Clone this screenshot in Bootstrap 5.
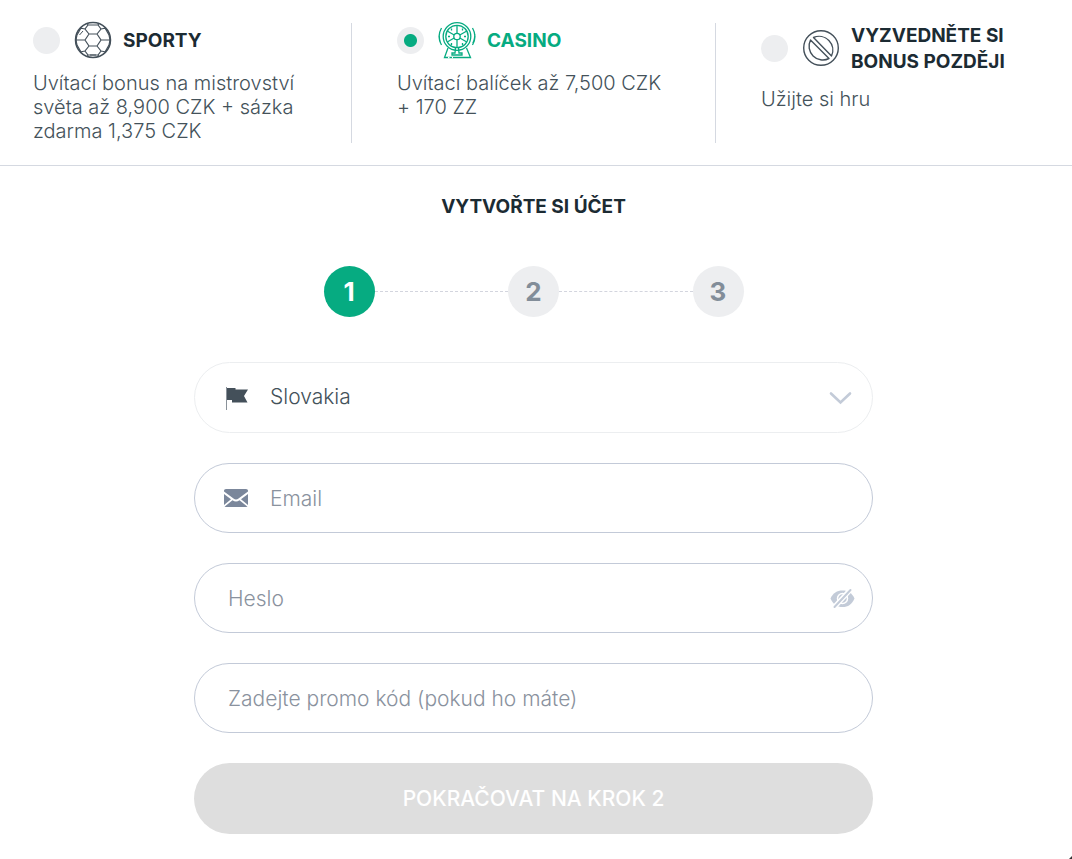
<!DOCTYPE html>
<html lang="cs">
<head>
<meta charset="utf-8">
<meta name="viewport" content="width=device-width, initial-scale=1">
<title>Vytvořte si účet</title>
<link href="https://cdn.jsdelivr.net/npm/bootstrap@5.3.0/dist/css/bootstrap.min.css" rel="stylesheet">
<style>
  body { font-family: Inter, "Liberation Sans", sans-serif; color: #44525a; background: #fff; }
  .bonuses { padding: 20px 4px 22px 0; border-bottom: 1px solid #d5d9e1; overflow: hidden; }
  .bonus { padding: 0 40px 0 45px; }
  .bonus + .bonus::before { content: ""; position: absolute; left: -1px; top: 3px; bottom: 0; border-left: 1px solid #d5d9e1; }
  .bonus-name { min-height: 39px; font-size: 19px; line-height: 26px; font-weight: 700; color: #1c2b33; cursor: pointer; }
  .bonus-name span { padding-top: 3px; }
  .bonus-name svg { width: 38px; height: 38px; margin: 0 11px 0 14px; flex: none; }
  .bonus-text { font-size: 20px; line-height: 24px; font-weight: 300; margin: 12px 0 0; }
  .bonus-radio.form-check-input { width: 27px; height: 27px; margin: 2px 0 0; border: 0; background: #edeef0; flex: none; }
  .bonus-radio.form-check-input:checked { background: radial-gradient(circle, #06ab81 6px, #edeef0 7px); }
  .bonus-name.chosen { color: #06ab81; }
  .signup { padding: 28px 5px 20px 0; }
  .signup-inner { max-width: 679px; }
  h1 { font-size: 19px; line-height: 26px; font-weight: 700; color: #1c2b33; margin: 0 0 46px; }
  .steps { max-width: 420px; margin-bottom: 45px; padding: 0; list-style: none; }
  .step { width: 51px; height: 51px; flex: none; background: #edeef0; color: #828d99; font-size: 26px; font-weight: 700; }
  .step-now { background: #06ab81; color: #fff; }
  .step-line { border-top: 1px dashed #d3d5de; }
  .fields { gap: 30px; }
  .pill.form-control, .pill.form-select { height: 70px; border: 1px solid #c3cad8; border-radius: 36px; padding: 0 60px 0 33px; font-size: 21px; font-weight: 300; color: #44525a; background: #fff; }
  .pill.form-select { height: 71px; border-color: #eceef0; padding-bottom: 2px; }
  .pill.with-icon { padding-left: 75px; }
  .pill::placeholder { color: #8a929e; opacity: 1; }
  .lead-icon { left: 29px; width: 26px; height: 26px; pointer-events: none; }
  .tail-icon { right: 18px; width: 26px; height: 26px; }
  .chevron { right: 19px; }
  .go.btn { height: 71px; border: 0; border-radius: 36px; background: #dedede; color: #fff; font-size: 21px; font-weight: 500; opacity: 1; }
  .corner { width: 3px; height: 3px; background: #333; clip-path: polygon(100% 0, 100% 100%, 0 100%); }
</style>
</head>
<body>
<header class="bonuses container-fluid">
  <div class="row">
    <div class="bonus col-4 position-relative">
      <label class="bonus-name d-flex align-items-center">
        <input class="form-check-input bonus-radio" type="radio" name="bonus">
        <svg viewBox="0 0 38 38" fill="none" stroke="#44505a" stroke-width="1.2" aria-hidden="true"><circle cx="19" cy="19" r="17.5" stroke-width="1.5"/><path d="M11 19l4-6h8l4 6-4 6h-8zM15 13l-4-5 3-4h10l3 4-4 5M15 25l-4 5 3 4h10l3-4-4-5M2 19h9M27 19h9M11 8L6 7M27 8l5-1M11 30l-5 1M27 30l5 1M2 19l1-5 4-7M36 19l-1-5-4-7M2 19l1 5 4 7M36 19l-1 5-4 7M14 4l-1-2M24 4l1-2M14 34l-1 2M24 34l1 2"/><path d="M5.500 14l3.500-4M16 34h6" stroke-width="1"/></svg>
        <span>SPORTY</span>
      </label>
      <p class="bonus-text">Uvítací bonus na mistrovství světa až 8,900 CZK + sázka zdarma 1,375 CZK</p>
    </div>
    <div class="bonus col-4 position-relative">
      <label class="bonus-name chosen d-flex align-items-center">
        <input class="form-check-input bonus-radio" type="radio" name="bonus" checked>
        <svg viewBox="0 0 38 38" fill="none" stroke="#06ab81" stroke-width="1.300" aria-hidden="true"><circle cx="19" cy="15.500" r="13.800"/><circle cx="19" cy="15.500" r="11.200"/><circle cx="19" cy="15.500" r="3.200"/><path d="M19 12.300v-8M19 18.700v8M16.200 14l-7-4M21.800 14l7-4M16.200 17l-7 4M21.800 17l7 4"/><path d="M3.500 7a17 17 0 0 0 0 17M1.200 14q0 5 1.300 8M34.500 7a17 17 0 0 1 0 17M36.800 13q0 6-2 9M10 27L6.500 36.500h26L28.500 27M17.500 27l-.5 5h-3v2h10v-2h-3l-.5-5"/><path d="M13.500 7.500v2M24.500 7.500v2M10 15.500h2M26 15.500h2M13.500 22v2M24.500 22v2"/><path d="M10 36.500h1.500M14 36.500h1" stroke="#fff"/></svg>
        <span>CASINO</span>
      </label>
      <p class="bonus-text">Uvítací balíček až 7,500 CZK + 170 ZZ</p>
    </div>
    <div class="bonus col-4 position-relative">
      <label class="bonus-name d-flex align-items-center">
        <input class="form-check-input bonus-radio" type="radio" name="bonus">
        <svg viewBox="0 0 38 38" fill="none" stroke="#44505a" stroke-width="1.400" aria-hidden="true"><circle cx="19" cy="19" r="17.300"/><path d="M11.500 8.500a13.800 13.800 0 0 1 18 18.500zM8.500 11a13.800 13.800 0 0 0 18.500 18.500z" stroke-linejoin="round"/></svg>
        <span>VYZVEDNĚTE SI BONUS POZDĚJI</span>
      </label>
      <p class="bonus-text">Užijte si hru</p>
    </div>
  </div>
</header>
<main class="signup container-fluid">
  <div class="signup-inner mx-auto">
    <h1 class="text-center">VYTVOŘTE SI ÚČET</h1>
    <ol class="steps d-flex align-items-center mx-auto">
      <li class="step step-now rounded-circle d-flex align-items-center justify-content-center" aria-current="step">1</li>
      <li class="step-line flex-fill" aria-hidden="true"></li>
      <li class="step rounded-circle d-flex align-items-center justify-content-center">2</li>
      <li class="step-line flex-fill" aria-hidden="true"></li>
      <li class="step rounded-circle d-flex align-items-center justify-content-center">3</li>
    </ol>
    <form class="fields d-grid">
      <div class="position-relative">
        <select class="form-select pill with-icon" aria-label="Země"><option>Slovakia</option></select>
        <svg class="lead-icon position-absolute top-50 translate-middle-y" viewBox="0 0 26 26" aria-hidden="true"><path d="M3.500 2v23" stroke="#8a929a" stroke-width="1"/><path d="M4 3h8.500v1.500H25L21 11l3.500 6.500H9V15H4z" fill="#44505a"/></svg>
        <svg class="tail-icon chevron position-absolute top-50 translate-middle-y pe-none" viewBox="0 0 26 26" fill="none" stroke="#c3cbd8" stroke-width="2.600" stroke-linecap="round" aria-hidden="true"><path d="M3 8.500l9.500 9L22 8.500"/></svg>
      </div>
      <div class="position-relative">
        <input class="form-control pill with-icon" type="email" placeholder="Email" aria-label="Email">
        <svg class="lead-icon position-absolute top-50 translate-middle-y" viewBox="0 0 26 26" fill="#7b879b" aria-hidden="true"><path d="M3 4h20q2 0 2 1.500v1L15.500 13.500Q13 15.500 10.500 13.500L1 6.500v-1Q1 4 3 4zM1 9l7 5.200L1 20zM25 9l-7 5.200L25 20zM1.500 21.800L9.500 15.300q3.500 2.500 7 0l8 6.500-1.500.200H3z"/></svg>
      </div>
      <div class="position-relative">
        <input class="form-control pill" type="password" placeholder="Heslo" aria-label="Heslo">
        <button type="button" class="tail-icon btn p-0 border-0 d-flex position-absolute top-50 translate-middle-y" aria-label="Zobrazit heslo"><svg width="26" height="26" viewBox="0 0 26 26" aria-hidden="true"><path d="M1.500 13.500C4 8 8 5.500 13.500 5.500S23 8 25.500 13.500C23 19.500 19 22 13.500 22S4 19.500 1.500 13.500z" fill="#c3cbd8"/><circle cx="13.500" cy="13.500" r="5" fill="none" stroke="#fff" stroke-width="1.500"/><path d="M5 22.500L22 4" stroke="#fff" stroke-width="5"/><path d="M5.500 22L21.500 5" stroke="#c3cbd8" stroke-width="2" stroke-linecap="round"/></svg></button>
      </div>
      <input class="form-control pill" type="text" placeholder="Zadejte promo kód (pokud ho máte)" aria-label="Promo kód">
      <button class="btn go" type="submit" disabled>POKRAČOVAT NA KROK 2</button>
    </form>
  </div>
</main>
<div class="corner position-fixed bottom-0 end-0"></div>
<script src="https://cdn.jsdelivr.net/npm/bootstrap@5.3.0/dist/js/bootstrap.bundle.min.js"></script>
</body>
</html>
